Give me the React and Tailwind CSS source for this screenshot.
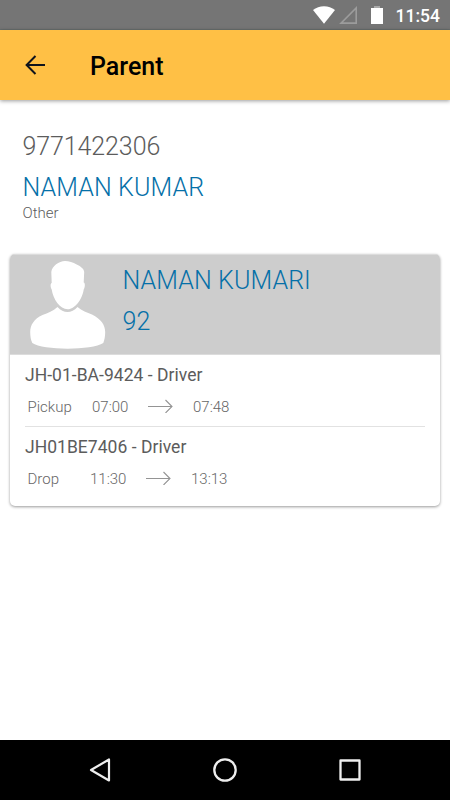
import React from "react";

const trips = [
  { vehicle: "JH-01-BA-9424", type: "Pickup", start: "07:00", end: "07:48" },
  { vehicle: "JH01BE7406", type: "Drop", start: "11:30", end: "13:13" },
];

const StatusBar = () => (
  <div className="flex h-[30px] items-center justify-end border-b border-[#69706f] bg-[#757575] pr-[10px] text-white">
    <svg width="22" height="18" viewBox="0 0 22 18" fill="#fff">
      <path d="M0 4.1C6 -1.1 16 -1.1 22 4.1L11 17.8Z" />
    </svg>
    <svg className="ml-[4px]" width="18" height="18" viewBox="0 0 18 18">
      <path
        d="M17.2 1.9V17.1H2Z"
        fill="none"
        stroke="#9c9c9c"
        strokeWidth="1.6"
      />
    </svg>
    <svg className="ml-[14px]" width="12" height="18" viewBox="0 0 12 18">
      <path d="M3 0h6v2h-6z" fill="#a9a9a9" />
      <path d="M0 2h12v16h-12z" fill="#fff" />
    </svg>
    <span className="ml-[13px] mt-[2px] text-[17.5px] leading-[20px] font-medium">
      11:54
    </span>
  </div>
);

const Avatar = () => (
  <svg className="mt-[6px] ml-[20px]" width="76" height="88" viewBox="0 0 76 88" fill="#fff">
    <path d="M35 0C39 0 43 1.500 46.700 3.500C51 5.500 54 8 54.200 11L53.700 21.500C55.500 22 55 26.500 53.700 28.500C52.500 38 45 48.300 37.700 48.300C30 48.300 23 38 21.700 28.500C20.300 26 20.200 22.500 21.700 22L21.300 11C22 5 29 0 35 0Z" />
    <path d="M27.500 46C33.500 52.600 41.500 52.600 47.500 46C52 50 57 51.500 62 53.500C71 58 75.200 64 75.200 71C75.200 75 74.500 79 73.300 82C62 89.500 13 89.500 2.300 82C0.800 79 0.200 75 0.200 71C0.200 64 4 58 12.500 54C18 52 23 50 27.500 46Z" />
  </svg>
);

const Trip = ({ trip }) => (
  <div className="mx-[15px] h-[72px] border-b border-[#e2e2e2] pt-[9px] last:h-[79px] last:border-b-0">
    <p className="text-[17.5px] leading-[22px] tracking-[0.03px] text-[#5c5c5c]">
      {trip.vehicle} - Driver
    </p>
    <div className="mt-[11px] flex items-center pl-[2.5px] text-[15px] leading-[20px] font-light text-[#666]">
      <span className={trip.type === "Drop" ? "w-[62.5px]" : "w-[64.5px]"}>
        {trip.type}
      </span>
      <span className="w-[37px]">{trip.start}</span>
      <svg className="mr-[20px] ml-[19px] -mt-[2px]" width="25" height="14" viewBox="0 0 25 14" fill="none" stroke="#949494" strokeWidth="1.1">
        <path d="M0 7.500H24M17.500 1L24 7.500L17.500 14" />
      </svg>
      <span>{trip.end}</span>
    </div>
  </div>
);

const App = () => {
  return (
    <div className="flex h-[800px] w-[450px] flex-col bg-white font-['Roboto',sans-serif]">
      <StatusBar />

      {/* Toolbar */}
      <header className="flex h-[70px] items-center bg-[#ffc045] text-black shadow-[0_1px_4px_rgba(0,0,0,0.4)]">
        <svg className="ml-[25px]" width="21" height="20" viewBox="0 0 21 20" fill="none" stroke="#10141c" strokeWidth="2">
          <path d="M20 10H2M10.500 1L1.600 10L10.500 19" />
        </svg>
        <h1 className="ml-[44px] mt-[3px] text-[25px] leading-[30px] font-medium">
          Parent
        </h1>
      </header>

      <main className="flex-1">
        <section className="h-[154px] px-[22.5px] pt-[32px] font-light">
          <p className="text-[25px] leading-[30px] tracking-[-0.1px] text-[#5c5c5c]">9771422306</p>
          <p className="mt-[11px] text-[25px] leading-[30px] tracking-[0.1px] text-[#0570a8]">
            NAMAN KUMAR
          </p>
          <p className="text-[15px] leading-[20px] text-[#5c5c5c]">Other</p>
        </section>

        {/* Student card */}
        <section className="mx-[10px] overflow-hidden rounded-[5px] bg-white shadow-[0_1px_3px_rgba(0,0,0,0.4)]">
          <div className="flex h-[101px] border-y border-[#dcdcdc] bg-[#cdcdcd]">
            <Avatar />
            <div className="ml-[16.5px] pt-[11px] text-[25px] leading-[30px] font-light tracking-[0.1px] text-[#0570a8]">
              <p>NAMAN KUMARI</p>
              <p className="mt-[11px]">92</p>
            </div>
          </div>
          {trips.map((trip) => (
            <Trip key={trip.vehicle} trip={trip} />
          ))}
        </section>
      </main>

      {/* System navigation */}
      <nav className="flex h-[60px] items-center justify-between bg-black px-[88px]">
        <svg width="24" height="26" viewBox="0 0 24 26" fill="none" stroke="#eee" strokeWidth="2.200" strokeLinejoin="round">
          <path d="M21 2.500V23.500L3 13Z" />
        </svg>
        <svg width="26" height="26" viewBox="0 0 26 26" fill="none" stroke="#eee" strokeWidth="2.300">
          <circle cx="13" cy="13" r="10.700" />
        </svg>
        <svg width="24" height="24" viewBox="0 0 24 24" fill="none" stroke="#eee" strokeWidth="2.300" strokeLinejoin="round">
          <path d="M2.500 2.500h19v19h-19z" />
        </svg>
      </nav>
    </div>
  );
};

export default App;
